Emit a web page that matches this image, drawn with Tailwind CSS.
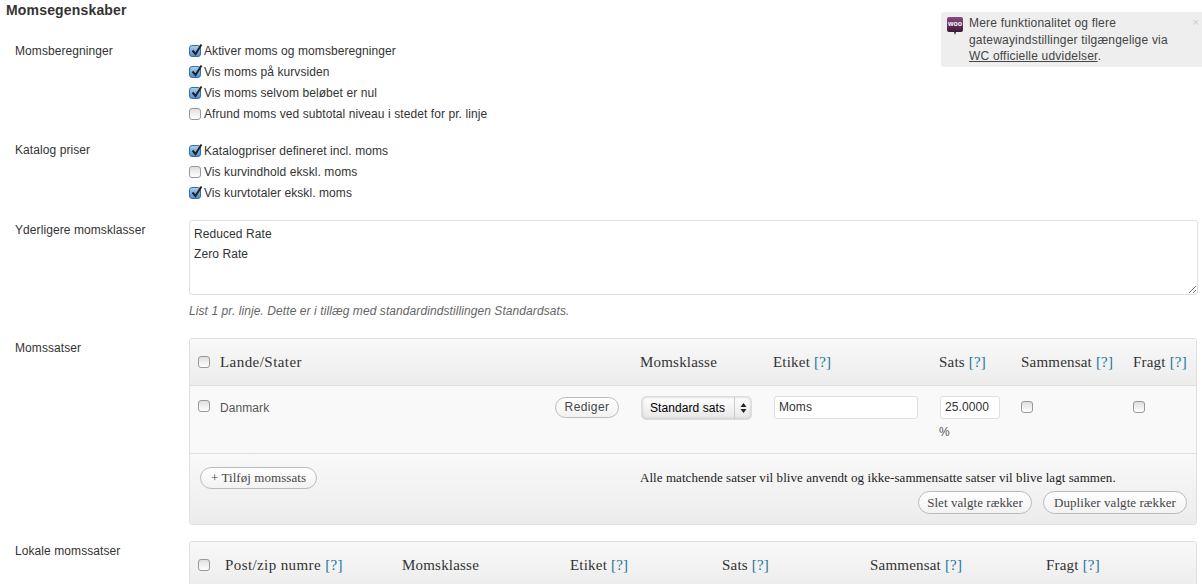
<!DOCTYPE html>
<html lang="da">
<head>
  <meta charset="UTF-8">
  <title>Momsegenskaber</title>
  <script src="https://cdn.jsdelivr.net/npm/@tailwindcss/browser@4"></script>
</head>
<body class="bg-white h-[584px] overflow-hidden relative font-['Liberation_Sans',Arial,sans-serif] text-[12px] tracking-[0.08px] text-[#333]">

  <!-- Notice -->
  <div class="absolute left-[941px] top-[12px] w-[261px] h-[55px] bg-[#eeeeee] rounded-l-[3px] pl-[28px] pt-[3px] leading-[16.5px] text-[12px] tracking-[0.2px] text-[#444]">
    <svg class="absolute left-[6px] top-[5px]" width="16" height="18" viewBox="0 0 16 18">
      <defs><linearGradient id="woo" x1="0" y1="0" x2="0" y2="1"><stop offset="0" stop-color="#8a4a82"/><stop offset="1" stop-color="#2e1029"/></linearGradient></defs>
      <path d="M2 0h12a2 2 0 0 1 2 2v11a2 2 0 0 1-2 2h-5l-1 3-1-3H2a2 2 0 0 1-2-2V2a2 2 0 0 1 2-2z" fill="url(#woo)"/>
    </svg>
    <span class="absolute left-[6px] top-[7px] w-[16px] text-center text-[7px] leading-[9px] tracking-normal font-bold text-white">woo</span>
    <span class="absolute right-[3px] top-[3px] text-[11px] leading-[14px] text-[#ccc]">×</span>
    <p>Mere funktionalitet og flere<br>gatewayindstillinger tilgængelige via<br><a href="#" class="underline">WC officielle udvidelser</a>.</p>
  </div>

  <h3 class="pl-[6px] pt-[2px] text-[14px] leading-[16px] tracking-[0.17px] font-bold text-[#333]">Momsegenskaber</h3>

  <!-- Momsberegninger -->
  <div class="flex mt-[21px]">
    <div class="w-[189px] pl-[15px] pt-[4px] leading-[16px]">Momsberegninger</div>
    <div class="flex flex-col gap-[5px] pt-[4px]">
      <label class="flex items-center gap-[3px] h-[16px]">
        <span class="w-[12px] h-[12px] rounded-[3px] border border-[#3a6ea8] bg-gradient-to-b from-[#a9cdf0] to-[#4f90d6] relative shrink-0"><svg class="absolute left-0 -top-[3px]" width="14" height="14" viewBox="0 0 14 14"><path d="M2.5 7.5l3 3.5 6-9.5" fill="none" stroke="#222" stroke-width="2"/></svg></span>
        Aktiver moms og momsberegninger
      </label>
      <label class="flex items-center gap-[3px] h-[16px]">
        <span class="w-[12px] h-[12px] rounded-[3px] border border-[#3a6ea8] bg-gradient-to-b from-[#a9cdf0] to-[#4f90d6] relative shrink-0"><svg class="absolute left-0 -top-[3px]" width="14" height="14" viewBox="0 0 14 14"><path d="M2.5 7.5l3 3.5 6-9.5" fill="none" stroke="#222" stroke-width="2"/></svg></span>
        Vis moms på kurvsiden
      </label>
      <label class="flex items-center gap-[3px] h-[16px]">
        <span class="w-[12px] h-[12px] rounded-[3px] border border-[#3a6ea8] bg-gradient-to-b from-[#a9cdf0] to-[#4f90d6] relative shrink-0"><svg class="absolute left-0 -top-[3px]" width="14" height="14" viewBox="0 0 14 14"><path d="M2.5 7.5l3 3.5 6-9.5" fill="none" stroke="#222" stroke-width="2"/></svg></span>
        Vis moms selvom beløbet er nul
      </label>
      <label class="flex items-center gap-[3px] h-[16px]">
        <span class="w-[12px] h-[12px] rounded-[3px] border border-[#999] bg-gradient-to-b from-[#dfdfdf] to-white shrink-0"></span>
        Afrund moms ved subtotal niveau i stedet for pr. linje
      </label>
    </div>
  </div>

  <!-- Katalog priser -->
  <div class="flex mt-[21px]">
    <div class="w-[189px] pl-[15px] leading-[16px] -mt-[1px]">Katalog priser</div>
    <div class="flex flex-col gap-[5px]">
      <label class="flex items-center gap-[3px] h-[16px]">
        <span class="w-[12px] h-[12px] rounded-[3px] border border-[#3a6ea8] bg-gradient-to-b from-[#a9cdf0] to-[#4f90d6] relative shrink-0"><svg class="absolute left-0 -top-[3px]" width="14" height="14" viewBox="0 0 14 14"><path d="M2.5 7.5l3 3.5 6-9.5" fill="none" stroke="#222" stroke-width="2"/></svg></span>
        Katalogpriser defineret incl. moms
      </label>
      <label class="flex items-center gap-[3px] h-[16px]">
        <span class="w-[12px] h-[12px] rounded-[3px] border border-[#999] bg-gradient-to-b from-[#dfdfdf] to-white shrink-0"></span>
        Vis kurvindhold ekskl. moms
      </label>
      <label class="flex items-center gap-[3px] h-[16px]">
        <span class="w-[12px] h-[12px] rounded-[3px] border border-[#3a6ea8] bg-gradient-to-b from-[#a9cdf0] to-[#4f90d6] relative shrink-0"><svg class="absolute left-0 -top-[3px]" width="14" height="14" viewBox="0 0 14 14"><path d="M2.5 7.5l3 3.5 6-9.5" fill="none" stroke="#222" stroke-width="2"/></svg></span>
        Vis kurvtotaler ekskl. moms
      </label>
    </div>
  </div>

  <!-- Yderligere momsklasser -->
  <div class="flex mt-[19px]">
    <div class="w-[189px] pl-[15px] pt-[2px] leading-[16px]">Yderligere momsklasser</div>
    <div class="w-[1009px]">
      <div class="h-[75px] border border-[#dfdfdf] rounded-[3px] px-[4px] pt-[3px] leading-[20px] relative">
        Reduced Rate<br>Zero Rate
        <svg class="absolute right-[1px] bottom-[1px]" width="8" height="8" viewBox="0 0 8 8"><path d="M1 8l7-7M5 8l3-3" stroke="#777" fill="none"/></svg>
      </div>
      <p class="mt-[8px] leading-[16px] italic text-[#666]">List 1 pr. linje. Dette er i tillæg med standardindstillingen Standardsats.</p>
    </div>
  </div>

  <!-- Momssatser -->
  <div class="flex mt-[19px]">
    <div class="w-[189px] pl-[15px] pt-[2px] leading-[16px]">Momssatser</div>
    <div class="w-[1008px] h-[187px] border border-[#dfdfdf] rounded-[3px] overflow-hidden">
      <div class="h-[47px] border-b border-[#dfdfdf] bg-gradient-to-b from-[#f9f9f9] to-[#ececec] grid grid-cols-[30px_420px_133px_166px_82px_112px_1fr] items-center font-['Liberation_Serif',serif] text-[15px] tracking-[0.2px] text-[#333]">
        <span class="ml-[8px] w-[12px] h-[12px] rounded-[3px] border border-[#999] bg-gradient-to-b from-[#dfdfdf] to-white"></span>
        <span class="tracking-[0.45px]">Lande/Stater</span>
        <span>Momsklasse</span>
        <span>Etiket <a href="#" class="text-[#21759b]">[?]</a></span>
        <span>Sats <a href="#" class="text-[#21759b]">[?]</a></span>
        <span>Sammensat <a href="#" class="text-[#21759b]">[?]</a></span>
        <span>Fragt <a href="#" class="text-[#21759b]">[?]</a></span>
      </div>
      <div class="h-[68px] border-b border-[#dfdfdf] bg-[#f9f9f9] grid grid-cols-[30px_420px_133px_166px_82px_112px_1fr] items-start">
        <span class="ml-[8px] mt-[14px] w-[12px] h-[12px] rounded-[3px] border border-[#999] bg-gradient-to-b from-[#dfdfdf] to-white"></span>
        <div class="flex justify-between items-center mt-[11px] pr-[21px] text-[#555]">
          <span>Danmark</span>
          <span class="w-[64px] h-[21px] rounded-full border border-[#bbb] bg-gradient-to-b from-white to-[#f2f2f2] text-center leading-[19px] text-[#464646] tracking-[0.4px]">Rediger</span>
        </div>
        <div class="ml-[1px] mt-[10px] w-[111px] h-[24px] rounded-[5px] border border-[#ddd] bg-gradient-to-b from-white to-[#e6e6e6] shadow-[inset_0_0_3px_#bbb] flex items-center text-black">
          <span class="flex-1 pl-[8px]">Standard sats</span>
          <span class="w-[17px] h-full border-l border-[#ccc] flex items-center justify-center">
            <svg width="7" height="10" viewBox="0 0 7 10"><path d="M3.5 0L6.5 4H.5zM3.5 10L.5 6h6z" fill="#222"/></svg>
          </span>
        </div>
        <div class="ml-[1px] mt-[10px] w-[144px] h-[23px] rounded-[3px] border border-[#dfdfdf] bg-white pl-[4px] leading-[21px]">Moms</div>
        <div class="mt-[10px]">
          <div class="ml-[1px] w-[60px] h-[23px] rounded-[3px] border border-[#dfdfdf] bg-white pl-[4px] leading-[21px]">25.0000</div>
          <div class="mt-[5px] leading-[16px] text-[#555]">%</div>
        </div>
        <span class="mt-[15px] w-[12px] h-[12px] rounded-[3px] border border-[#999] bg-gradient-to-b from-[#dfdfdf] to-white"></span>
        <span class="mt-[15px] w-[12px] h-[12px] rounded-[3px] border border-[#999] bg-gradient-to-b from-[#dfdfdf] to-white"></span>
      </div>
      <div class="h-[70px] bg-gradient-to-b from-[#f9f9f9] to-[#ececec] flex justify-between pl-[10px] pr-[9px] pt-[13px] font-['Liberation_Serif',serif] text-[13px] tracking-[0.06px]">
        <span class="w-[117px] h-[22px] rounded-full border border-[#bbb] bg-gradient-to-b from-white to-[#f2f2f2] text-center leading-[20px] text-[#464646]">+ Tilføj momssats</span>
        <div class="flex flex-col items-end">
          <p class="leading-[22px] w-[547px] text-[#222]">Alle matchende satser vil blive anvendt og ikke-sammensatte satser vil blive lagt sammen.</p>
          <div class="flex gap-[11px] mt-[2px] text-[#464646]">
            <span class="w-[114px] h-[23px] rounded-full border border-[#bbb] bg-gradient-to-b from-white to-[#f2f2f2] text-center leading-[21px]">Slet valgte rækker</span>
            <span class="w-[144px] h-[23px] rounded-full border border-[#bbb] bg-gradient-to-b from-white to-[#f2f2f2] text-center leading-[21px]">Dupliker valgte rækker</span>
          </div>
        </div>
      </div>
    </div>
  </div>

  <!-- Lokale momssatser -->
  <div class="flex mt-[16px]">
    <div class="w-[189px] pl-[15px] pt-[2px] leading-[16px]">Lokale momssatser</div>
    <div class="w-[1008px] h-[60px] border border-[#dfdfdf] rounded-[3px] overflow-hidden">
      <div class="h-[47px] border-b border-[#dfdfdf] bg-gradient-to-b from-[#f9f9f9] to-[#ececec] grid grid-cols-[35px_177px_168px_152px_148px_176px_1fr] items-center font-['Liberation_Serif',serif] text-[15px] tracking-[0.2px] text-[#333]">
        <span class="ml-[8px] w-[12px] h-[12px] rounded-[3px] border border-[#999] bg-gradient-to-b from-[#dfdfdf] to-white"></span>
        <span class="tracking-[0.4px]">Post/zip numre <a href="#" class="text-[#21759b]">[?]</a></span>
        <span>Momsklasse</span>
        <span>Etiket <a href="#" class="text-[#21759b]">[?]</a></span>
        <span>Sats <a href="#" class="text-[#21759b]">[?]</a></span>
        <span>Sammensat <a href="#" class="text-[#21759b]">[?]</a></span>
        <span>Fragt <a href="#" class="text-[#21759b]">[?]</a></span>
      </div>
    </div>
  </div>

</body>
</html>
